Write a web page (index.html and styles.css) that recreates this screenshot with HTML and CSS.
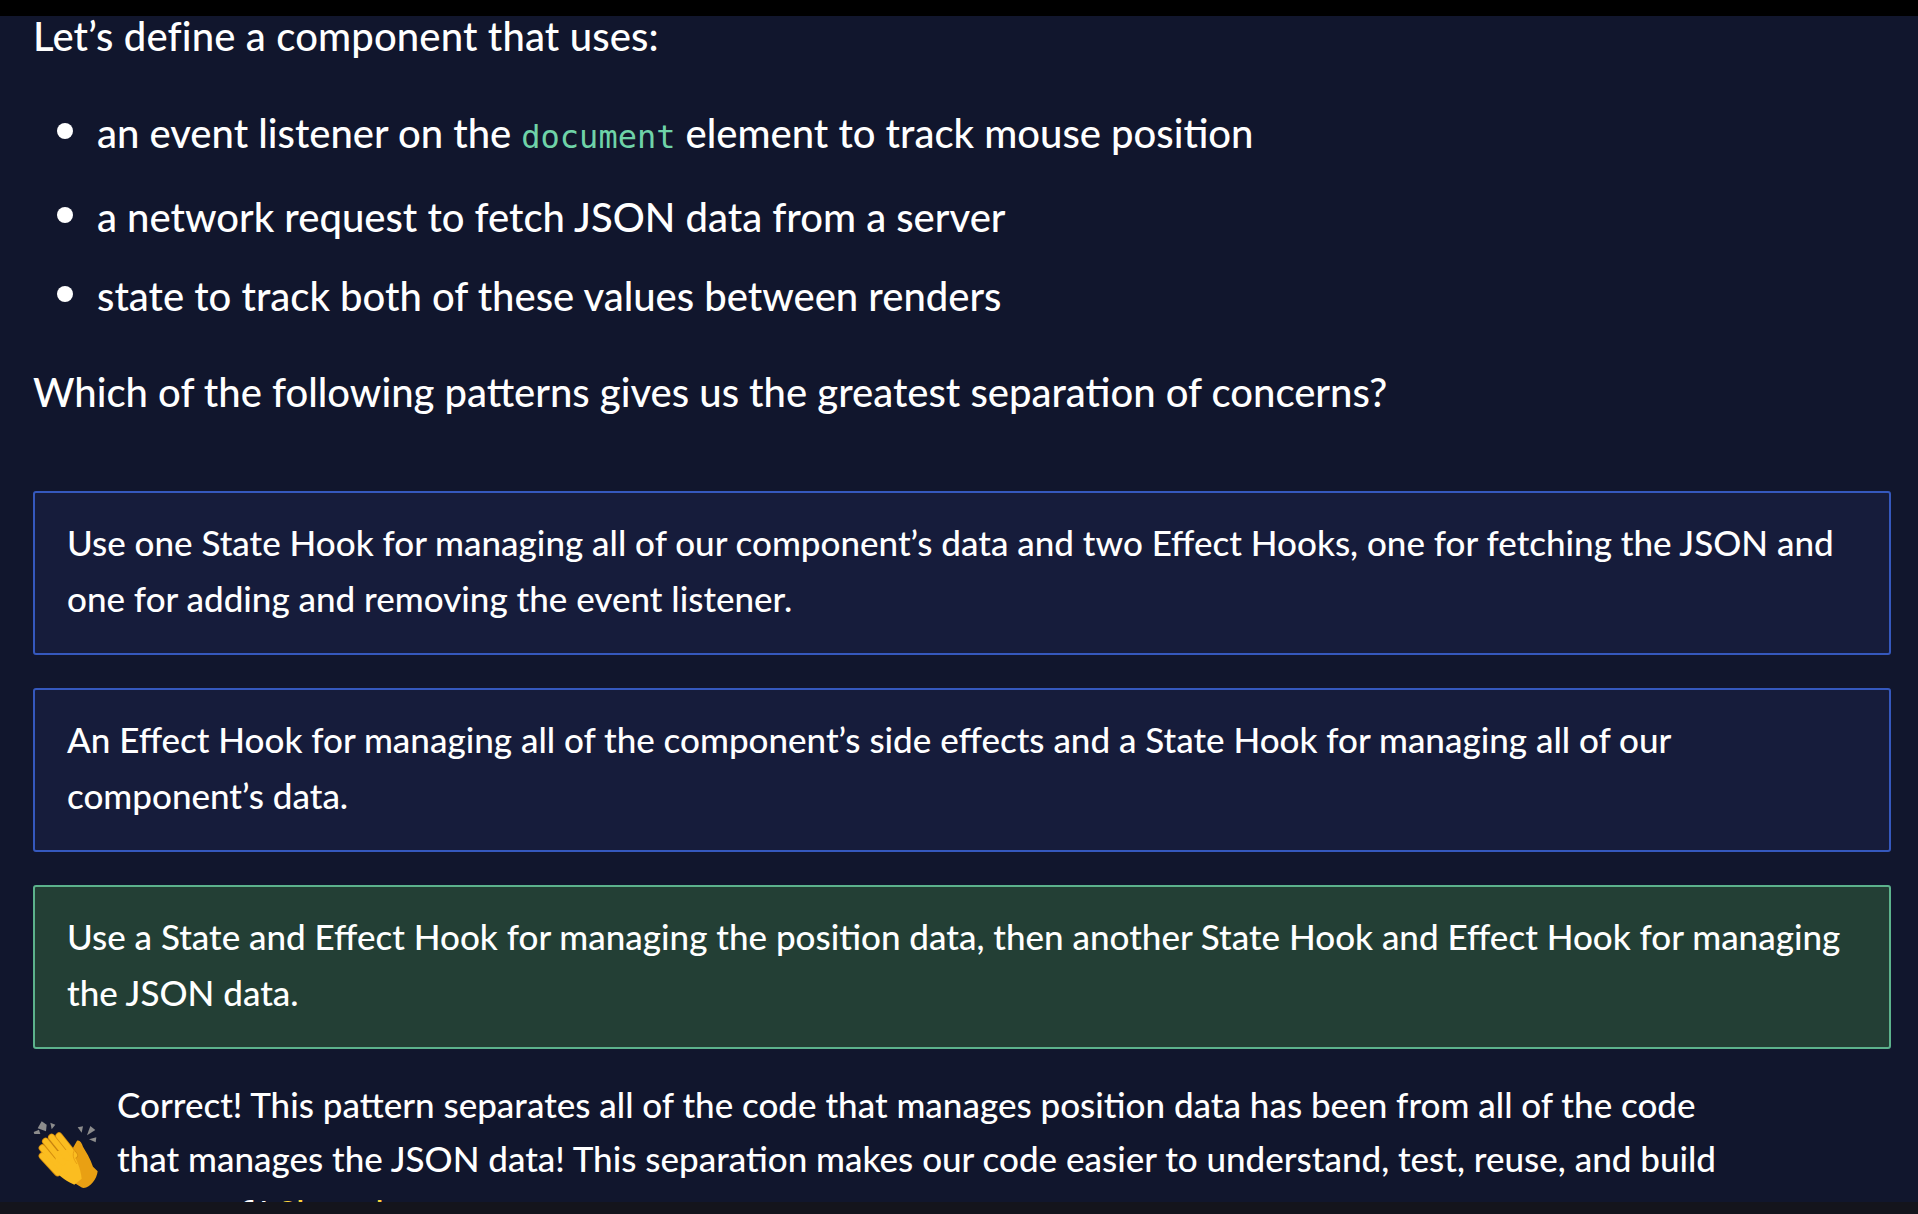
FILE: index.html
```html
<!doctype html>
<html>
<head>
<meta charset="utf-8">
<title>Quiz</title>
<link rel="stylesheet" href="styles.css">
</head>
<body>
<div class="topbar"></div>
<div class="lesson">
  <p class="lead">Let’s define a component that uses:</p>
  <ul class="points">
    <li>an event listener on the <code>document</code> element to track mouse position</li>
    <li>a network request to fetch JSON data from a server</li>
    <li>state to track both of these values between renders</li>
  </ul>
  <p class="question">Which of the following patterns gives us the greatest separation of concerns?</p>
  <div class="answers">
    <div class="answer">Use one State Hook for managing all of our component’s data and two Effect Hooks, one for fetching the JSON and one for adding and removing the event listener.</div>
    <div class="answer">An Effect Hook for managing all of the component’s side effects and a State Hook for managing all of our component’s data.</div>
    <div class="answer correct">Use a State and Effect Hook for managing the position data, then another State Hook and Effect Hook for managing the JSON data.</div>
  </div>
  <div class="feedback">
    <svg class="clap" viewBox="40 25 195 207">
      <g fill="#8c8c8c">
        <path d="M66 26l15 10-2 20-25-9z"/>
        <path d="M92 30l15 6-11 14z"/>
        <path d="M42 58l16-7 4 13-18 0z"/>
        <path d="M174 44l16-3-4 19z"/>
        <path d="M212 40l15 12-25 16z"/>
        <path d="M208 80l22-6-2 15z"/>
      </g>
      <path fill="#e9a013" d="M172 84c8-3 14 6 18 18 8 14 22 34 30 60l14 14c-2 22-22 50-42 50-8 0-22-14-44-24l-20-40z"/>
      <g fill="none" stroke-linecap="round">
        <g stroke="#d68f10" stroke-width="22">
          <path d="M118 70l46 58"/>
          <path d="M96 74l50 62"/>
          <path d="M78 86l52 64"/>
          <path d="M68 106l50 60"/>
          <path d="M68 130l46 50"/>
        </g>
      </g>
      <path fill="#fbbd20" d="M112 116l38-6c20 26 32 54 36 88l-22 18c-20-8-42-22-62-46z"/>
      <g fill="none" stroke-linecap="round" stroke="#fbbd20" stroke-width="17">
        <path d="M118 70l46 58"/>
        <path d="M96 74l50 62"/>
        <path d="M78 86l52 64"/>
        <path d="M68 106l50 60"/>
        <path d="M68 130l46 50"/>
      </g>
      <path fill="none" stroke="#e9a013" stroke-width="3" d="M164 112c-6 14-4 26 8 42"/>
    </svg>
    <div class="message">
      Correct! This pattern separates all of the code that manages position data has been from all of the code
      that manages the JSON data! This separation makes our code easier to understand, test, reuse, and build
      custom fi! <span class="share">Shared</span>
    </div>
  </div>
</div>
<div class="bottombar"></div>
</body>
</html>
```

FILE: styles.css
```css
html, body {
	margin: 0;
	height: 100%;
}
body {
	height: 1214px;
	overflow: hidden;
	display: flex;
	flex-direction: column;
	background-color: #11162d;
	color: #fff;
	font-family: Lato, sans-serif;
}
.topbar {
	height: 16px;
	background-color: #000;
	flex: none;
}
.lesson {
	flex: 1;
	min-height: 0;
	overflow: hidden;
	padding: 0 27px 0 33px;
}
.lead, .question {
	margin: 0;
	font-size: 40px;
	font-weight: 500;
	line-height: 46px;
}
.lead {
	line-height: 40px;
	letter-spacing: 0.15px;
}
.points {
	margin: 54px 0 0;
	padding: 0 0 0 64px;
	list-style: none;
}
.points li {
	position: relative;
	font-size: 40px;
	font-weight: 500;
	line-height: 46px;
	margin-bottom: 33.5px;
}
.points li::before {
	content: "";
	position: absolute;
	left: -40px;
	top: 13px;
	width: 16px;
	height: 16px;
	border-radius: 50%;
	background-color: #fff;
}
code {
	font-family: "DejaVu Sans Mono", monospace;
	font-size: 32px;
	font-weight: 400;
	color: #6fd3a8;
}
.question {
	margin-top: 50px;
}
.answers {
	margin-top: 76px;
	display: flex;
	flex-direction: column;
	gap: 33px;
}
.answer {
	box-sizing: border-box;
	height: 164px;
	padding: 21px 32px;
	border: 2px solid #3558bd;
	border-radius: 3px;
	background-color: #161c3b;
	font-size: 35px;
	font-weight: 500;
	line-height: 56px;
}
.answer.correct {
	border-color: #5cb28c;
	background-color: #233f35;
}
.feedback {
	margin-top: 28px;
	display: flex;
	align-items: flex-start;
	gap: 19px;
}
.clap {
	width: 65px;
	height: 69px;
	margin-top: 44px;
	flex: none;
}
.message {
	width: 1625px;
	font-size: 35px;
	font-weight: 500;
	line-height: 54px;
}
.share {
	color: #ffd53d;
}
.bottombar {
	height: 12px;
	flex: none;
	background-color: #14141c;
}
```
